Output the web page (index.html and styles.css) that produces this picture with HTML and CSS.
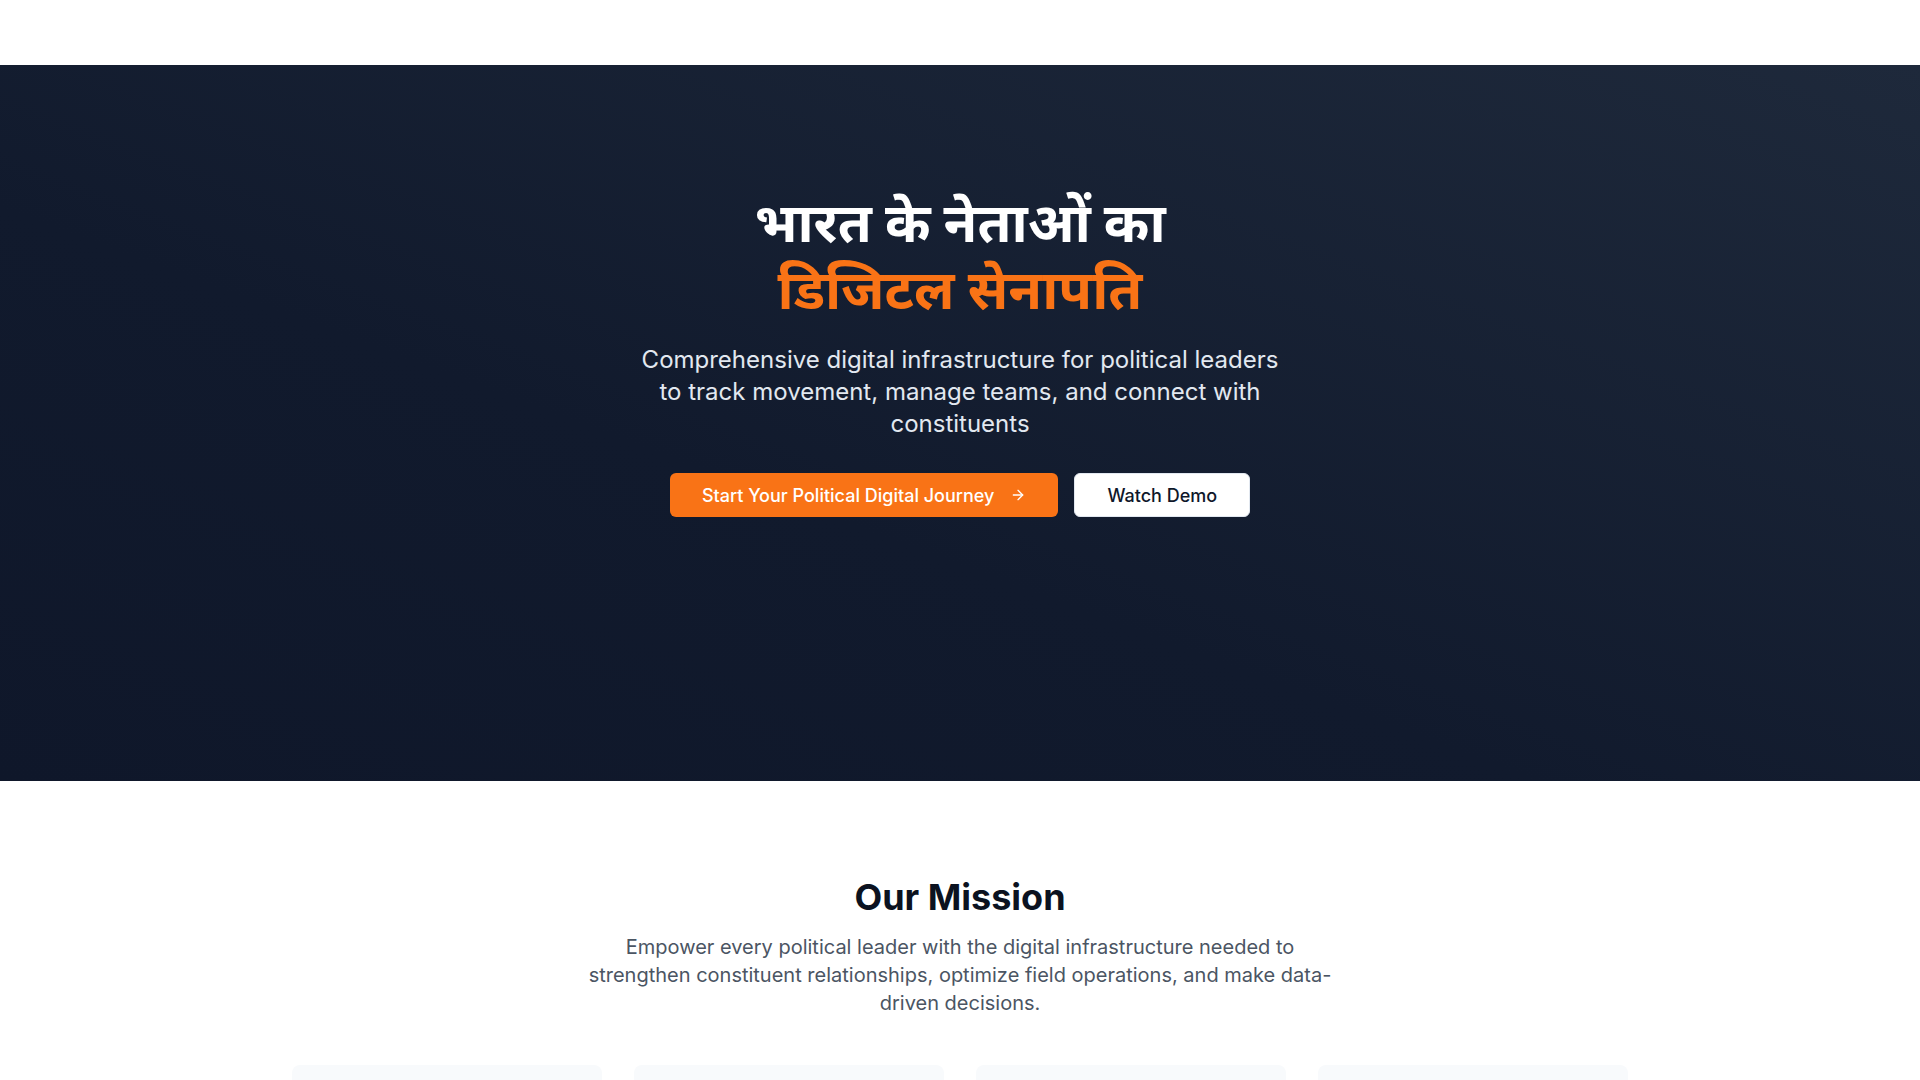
FILE: index.html
```html
<!DOCTYPE html>
<html lang="hi">
<head>
<meta charset="utf-8">
<title>डिजिटल सेनापति</title>
<link rel="stylesheet" href="styles.css">
</head>
<body>
<header class="topbar"></header>
<main>
  <section class="hero">
    <div class="hero-inner">
      <h1 class="hero-title">
        <span class="line">भारत के नेताओं का</span>
        <span class="line accent">डिजिटल सेनापति</span>
      </h1>
      <p class="hero-sub">Comprehensive digital infrastructure for political leaders to track movement, manage teams, and connect with constituents</p>
      <div class="hero-actions">
        <a class="btn btn-primary" href="#">Start Your Political Digital Journey
          <svg class="btn-icon" viewBox="0 0 24 24" fill="none" stroke="currentColor" stroke-width="2" stroke-linecap="round" stroke-linejoin="round"><path d="M5 12h14"/><path d="m12 5 7 7-7 7"/></svg>
        </a>
        <a class="btn btn-light" href="#">Watch Demo</a>
      </div>
    </div>
  </section>
  <section class="mission">
    <div class="container">
      <h2 class="mission-title">Our Mission</h2>
      <p class="mission-text">Empower every political leader with the digital infrastructure needed to strengthen constituent relationships, optimize field operations, and make data-driven decisions.</p>
      <div class="cards">
        <div class="card"><div class="card-icon"></div><h3>Real-time Tracking</h3><p>Monitor field movement across constituencies.</p></div>
        <div class="card"><div class="card-icon"></div><h3>Team Management</h3><p>Coordinate karyakartas and volunteers.</p></div>
        <div class="card"><div class="card-icon"></div><h3>Constituent Connect</h3><p>Engage citizens with direct outreach.</p></div>
        <div class="card"><div class="card-icon"></div><h3>Data Insights</h3><p>Make decisions backed by analytics.</p></div>
      </div>
    </div>
  </section>
</main>
</body>
</html>
```
FILE: styles.css
```css
* { box-sizing: border-box; }
html, body { margin: 0; padding: 0; }
body {
  font-family: Inter, "Noto Sans", sans-serif;
  background: #ffffff;
  color: #0f172a;
}
.topbar {
  height: 65px;
  background: #ffffff;
}
.hero {
  height: 716px;
  background: linear-gradient(to top right, #0f172a 0%, #111a2d 40%, #1e293b 100%);
  padding-top: 124px;
}
.hero-inner {
  max-width: 1400px;
  margin: 0 auto;
  padding: 0 32px;
  display: flex;
  flex-direction: column;
  align-items: center;
  text-align: center;
}
.hero-title {
  margin: 0 0 21px;
  font-size: 55px;
  font-weight: 700;
  line-height: 67px;
  color: #ffffff;
}
.hero-title .line { display: block; }
.hero-title .accent { color: #f97316; }
.hero-sub {
  margin: 0 0 33px;
  max-width: 660px;
  font-size: 24px;
  line-height: 32px;
  color: #e2e8f0;
}
.hero-actions {
  display: flex;
  gap: 16px;
}
.btn {
  display: inline-flex;
  align-items: center;
  justify-content: center;
  gap: 16px;
  height: 44px;
  padding: 0 32px;
  border-radius: 6px;
  font-size: 18px;
  font-weight: 500;
  text-decoration: none;
  white-space: nowrap;
}
.btn-primary { background: #f97316; color: #ffffff; }
.btn-light { background: #ffffff; color: #0f172a; border: 1px solid #e2e8f0; }
.btn-icon { width: 16px; height: 16px; }
.mission {
  padding: 96px 0;
  background: #ffffff;
}
.container {
  max-width: 1400px;
  margin: 0 auto;
  padding: 0 32px;
  text-align: center;
}
.mission-title {
  margin: 0 0 16px;
  font-size: 36px;
  line-height: 40px;
  font-weight: 700;
  color: #0b1220;
}
.mission-text {
  margin: 0 auto 48px;
  max-width: 768px;
  font-size: 20px;
  line-height: 28px;
  color: #4b5563;
}
.cards {
  display: grid;
  grid-template-columns: repeat(4, 1fr);
  gap: 32px;
}
.card {
  background: #f8fafc;
  border-radius: 8px;
  padding: 40px 24px;
  text-align: center;
}
.card-icon {
  width: 56px;
  height: 56px;
  margin: 0 auto 16px;
  border-radius: 50%;
  background: #ffedd5;
}
.card h3 { margin: 0 0 8px; font-size: 20px; }
.card p { margin: 0; color: #4b5563; }
```
